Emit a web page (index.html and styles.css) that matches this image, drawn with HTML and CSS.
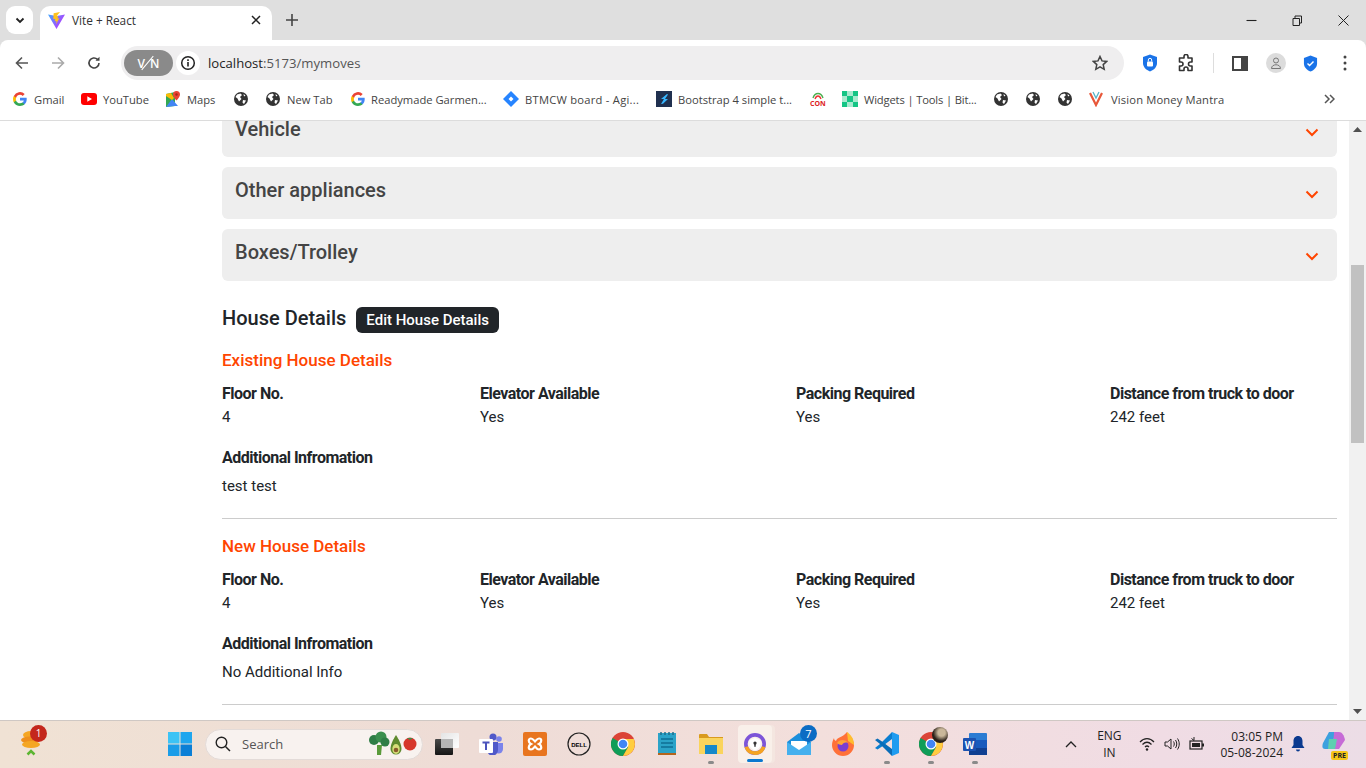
FILE: index.html
```html
<!DOCTYPE html>
<html lang="en">
<head>
    <meta charset="UTF-8">
    <title>Vite + React</title>
    <link rel="stylesheet" href="styles.css">
</head>
<body>

    <!-- Tab strip -->
    <div class="tabstrip">
        <div class="tab-search">
            <svg width="12" height="12" viewBox="0 0 12 12"><path d="M2.500 4.500 6 8l3.500-3.500" fill="none" stroke="#222" stroke-width="1.800"/></svg>
        </div>
        <div class="tab">
            <svg class="tab-icon" width="17" height="17" viewBox="0 0 16 16">
                <defs>
                    <linearGradient id="vite-body" x1="0" y1="0" x2="1" y2="0.600">
                        <stop offset="0" stop-color="#41a8ff"/>
                        <stop offset="1" stop-color="#bd34fe"/>
                    </linearGradient>
                </defs>
                <path d="M0 2.300 8 16 16 2.300 8 3.700Z" fill="url(#vite-body)"/>
                <path d="M11.300 0 5.300 1.100 5 6.800l1.800-.4-.4 2.400 1.600-.4-.5 3.200 3.200-5.800-1.800.4.700-2.400-1.600.3Z" fill="#ffc21c"/>
            </svg>
            <span class="tab-title">Vite + React</span>
            <svg class="tab-close" width="10" height="10" viewBox="0 0 10 10"><path d="M1 1l8 8M9 1 1 9" stroke="#222" stroke-width="1.500"/></svg>
        </div>
        <svg class="new-tab" width="12" height="12" viewBox="0 0 12 12"><path d="M6 0v12M0 6h12" stroke="#444" stroke-width="1.600"/></svg>
        <div class="window-controls">
            <svg width="11" height="11" viewBox="0 0 11 11"><path d="M0.500 5.500h10" stroke="#222" stroke-width="1.100"/></svg>
            <svg width="11" height="11" viewBox="0 0 11 11"><path d="M1 3.500h6.500v7H1zM3 3.500V1h6.500v7H7.500" fill="none" stroke="#222"/></svg>
            <svg width="11" height="11" viewBox="0 0 11 11"><path d="M.5.5l10 10M10.500.5l-10 10" stroke="#222" stroke-width="1"/></svg>
        </div>
    </div>

    <!-- Address bar -->
    <div class="toolbar">
        <svg class="nav-icon" width="14" height="14" viewBox="0 0 14 14"><path d="M13 7H2M7 1.500 1.500 7 7 12.500" fill="none" stroke="#555" stroke-width="1.600"/></svg>
        <svg class="nav-icon" width="14" height="14" viewBox="0 0 14 14"><path d="M1 7h11M7 1.500 12.500 7 7 12.500" fill="none" stroke="#aaa" stroke-width="1.600"/></svg>
        <svg class="nav-icon" width="14" height="14" viewBox="0 0 14 14"><path d="M12 7a5 5 0 1 1-1.500-3.600" fill="none" stroke="#444" stroke-width="1.600"/><path d="M12.500 0.800v4h-4z" fill="#444"/></svg>
        <div class="omnibox">
            <div class="vpn-pill"><span>V</span><i></i><span>N</span></div>
            <div class="site-info">
                <svg width="16" height="16" viewBox="0 0 16 16"><circle cx="8" cy="8" r="6.300" fill="none" stroke="#222" stroke-width="1.500"/><path d="M8 7v4.500M8 4.200v1.700" stroke="#222" stroke-width="1.600"/></svg>
            </div>
            <span class="url"><span class="url-host">localhost</span>:5173/mymoves</span>
            <svg class="star" width="16" height="16" viewBox="0 0 16 16"><path d="M8 1.500l2 4.400 4.700.5-3.500 3.200 1 4.700L8 11.900l-4.200 2.400 1-4.700L1.300 6.400 6 5.900Z" fill="none" stroke="#444" stroke-width="1.500"/></svg>
        </div>
        <div class="toolbar-icons">
            <svg class="ti-lock" width="16" height="18" viewBox="0 0 16 18"><path d="M8 0.500 15 3v6c0 4-3 7-7 8.500C4 16 1 13 1 9V3Z" fill="#1a73e8"/><rect x="5" y="7.500" width="6" height="5" rx="1" fill="#fff"/><path d="M6.300 7.500V6a1.700 1.700 0 0 1 3.400 0v1.500" fill="none" stroke="#fff"/></svg>
            <svg width="18" height="18" viewBox="0 0 18 18"><path d="M7 2.500a2 2 0 0 1 4 0V4h4v4h-1.500a2 2 0 0 0 0 4H15v4.500H11V15a2 2 0 0 0-4 0v1.500H2.500V12H4a2 2 0 0 0 0-4H2.500V4H7Z" fill="none" stroke="#333" stroke-width="1.600" stroke-linejoin="round"/></svg>
            <i class="toolbar-sep"></i>
            <svg width="16" height="16" viewBox="0 0 16 16"><path fill-rule="evenodd" d="M0 1h16v15H0ZM2 3v11h7V3Z" fill="#444"/></svg>
            <div class="avatar">
                <svg width="12" height="12" viewBox="0 0 12 12"><circle cx="6" cy="3.500" r="2.500" fill="none" stroke="#777"/><path d="M1.500 11.500c0-5 9-5 9 0Z" fill="none" stroke="#777"/></svg>
            </div>
            <svg class="ti-check" width="15" height="17" viewBox="0 0 16 18"><path d="M8 0.500 15 3v6c0 4-3 7-7 8.500C4 16 1 13 1 9V3Z" fill="#1a73e8"/><path d="M4.800 9 7 11.200 11.200 6.800" fill="none" stroke="#fff" stroke-width="1.500"/></svg>
            <svg class="ti-menu" width="4" height="16" viewBox="0 0 4 16"><circle cx="2" cy="2" r="1.500" fill="#444"/><circle cx="2" cy="8" r="1.500" fill="#444"/><circle cx="2" cy="14" r="1.500" fill="#444"/></svg>
        </div>
    </div>

    <!-- Bookmarks -->
    <div class="bookmarks">
        <a class="bm bm-gmail"><svg width="14" height="14" viewBox="0 0 14 14"><use href="#g-logo"/></svg>Gmail</a>
        <a class="bm bm-yt"><svg width="16" height="12" viewBox="0 0 16 12"><rect width="16" height="12" rx="3" fill="#f00"/><path d="M6.300 3.300v5.400L11 6Z" fill="#fff"/></svg>YouTube</a>
        <a class="bm bm-maps"><svg width="14" height="16" viewBox="0 0 14 16"><path d="M0 3 9 1v14L0 16Z" fill="#34a853"/><path d="M0 16 6 8l6 7-3 0Z" fill="#4285f4"/><path d="M0 3l5-1 3 5-2 2-6-4Z" fill="#fbbc04"/><path d="M10.500 0a3.500 3.500 0 0 1 3.500 3.500c0 2.500-3.500 6-3.500 6S7 6 7 3.500A3.500 3.500 0 0 1 10.500 0Z" fill="#ea4335"/><circle cx="10.500" cy="3.500" r="1.200" fill="#a52714"/></svg>Maps</a>
        <a class="bm bm-globe"><svg width="14" height="14" viewBox="0 0 14 14"><use href="#globe"/></svg></a>
        <a class="bm bm-newtab"><svg width="14" height="14" viewBox="0 0 14 14"><use href="#globe"/></svg>New Tab</a>
        <a class="bm bm-ready"><svg width="14" height="14" viewBox="0 0 14 14"><use href="#g-logo"/></svg>Readymade Garmen...</a>
        <a class="bm bm-jira"><svg width="16" height="16" viewBox="0 0 16 16"><path d="M8 0l8 8-8 8-8-8Z" fill="#2684ff"/><path d="M8 5.500 10.500 8 8 10.500 5.500 8Z" fill="#fff"/></svg><span class="wide-text">BTMCW board - Agi...</span></a>
        <a class="bm bm-boot"><svg width="16" height="16" viewBox="0 0 16 16"><rect width="16" height="16" fill="#20304f"/><path d="M11 3 5 8h3l-3 5 2-.2L12 8H9l3-4.500Z" fill="#38b6ff"/></svg>Bootstrap 4 simple t...</a>
        <a class="bm bm-con"><svg width="16" height="16" viewBox="0 0 16 16"><path d="M3 7c2-6 8-6 10 0" fill="none" stroke="#4caf50" stroke-width="1.400"/><path d="M5 8c1.500-4 4.500-4 6 0" fill="none" stroke="#e33" stroke-width="1.400"/></svg><span class="con-text">CON</span></a>
        <a class="bm bm-widgets"><span class="widget-logo"><i></i><i></i><i></i><i></i><i></i><i></i><i></i><i></i><i></i></span><span class="narrow-text">Widgets | Tools | Bit...</span></a>
        <a class="bm bm-globe"><svg width="14" height="14" viewBox="0 0 14 14"><use href="#globe"/></svg></a>
        <a class="bm bm-globe"><svg width="14" height="14" viewBox="0 0 14 14"><use href="#globe"/></svg></a>
        <a class="bm bm-globe bm-last-globe"><svg width="14" height="14" viewBox="0 0 14 14"><use href="#globe"/></svg></a>
        <a class="bm bm-vision"><svg width="14" height="16" viewBox="0 0 14 16"><path d="M1 2l6 12 6-12" fill="none" stroke="#e8583a" stroke-width="2.200"/><path d="M4 1l3 6 3-6" fill="none" stroke="#56b4c9" stroke-width="1.300"/></svg>Vision Money Mantra</a>
        <svg class="bm-more" width="11" height="10" viewBox="0 0 11 10"><path d="M1 1l4 4-4 4M6 1l4 4-4 4" fill="none" stroke="#555" stroke-width="1.500"/></svg>
    </div>

    <!-- Shared icon shapes -->
    <svg class="defs" width="0" height="0">
        <defs>
            <g id="g-logo">
                <path d="M13.700 7.200c0-.5 0-1-.1-1.400H7v2.700h3.800a3.200 3.200 0 0 1-1.400 2.100v1.700h2.200c1.300-1.200 2.100-3 2.100-5.100Z" fill="#4285f4"/>
                <path d="M7 14c1.900 0 3.400-.6 4.600-1.700L9.400 10.600c-.6.400-1.400.7-2.400.7-1.800 0-3.400-1.200-3.900-2.900H.8v1.800A7 7 0 0 0 7 14Z" fill="#34a853"/>
                <path d="M3.100 8.400a4.200 4.200 0 0 1 0-2.700V3.900H.8a7 7 0 0 0 0 6.300Z" fill="#fbbc05"/>
                <path d="M7 2.800c1 0 2 .4 2.700 1.100l2-2A7 7 0 0 0 .8 3.900l2.300 1.800C3.600 4 5.200 2.800 7 2.800Z" fill="#ea4335"/>
            </g>
            <g id="globe">
                <circle cx="7" cy="7" r="7" fill="#333"/>
                <path d="M3 2.500 6.500 1.500 8 3 6 5 7.500 7 5 9.500 3.500 6.500 1.500 5ZM9 8l3 .5-2 3.500-1.500-1.500ZM9.500 2l2 1.500-1.500 1Z" fill="#fff"/>
            </g>
            <g id="chrome">
                <circle cx="12" cy="12" r="12" fill="#db4437"/>
                <path d="M12 12 1.600 6A12 12 0 0 0 12 24l5.200-9Z" fill="#0f9d58"/>
                <path d="M12 7h10.800A12 12 0 0 1 12 24l5.200-9Z" fill="#ffcd40"/>
                <circle cx="12" cy="12" r="5.500" fill="#fff"/>
                <circle cx="12" cy="12" r="4.300" fill="#4285f4"/>
            </g>
        </defs>
    </svg>

    <!-- Page -->
    <div class="viewport">
        <main class="page">
            <div class="accordion">
                <div class="acc-item">
                    <h2>Vehicle</h2>
                    <svg width="14" height="9" viewBox="0 0 14 9"><path d="M1.500 1.500 7 7l5.500-5.500" fill="none" stroke="#ff4500" stroke-width="2"/></svg>
                </div>
                <div class="acc-item">
                    <h2>Other appliances</h2>
                    <svg width="14" height="9" viewBox="0 0 14 9"><path d="M1.500 1.500 7 7l5.500-5.500" fill="none" stroke="#ff4500" stroke-width="2"/></svg>
                </div>
                <div class="acc-item">
                    <h2>Boxes/Trolley</h2>
                    <svg width="14" height="9" viewBox="0 0 14 9"><path d="M1.500 1.500 7 7l5.500-5.500" fill="none" stroke="#ff4500" stroke-width="2"/></svg>
                </div>
            </div>

            <div class="house-head">
                <h3>House Details</h3>
                <button class="edit-btn">Edit House Details</button>
            </div>

            <section class="house">
                <h4>Existing House Details</h4>
                <div class="info-row">
                    <div><p class="label">Floor No.</p><p class="value">4</p></div>
                    <div><p class="label">Elevator Available</p><p class="value">Yes</p></div>
                    <div><p class="label">Packing Required</p><p class="value">Yes</p></div>
                    <div><p class="label">Distance from truck to door</p><p class="value">242 feet</p></div>
                </div>
                <p class="label extra-label">Additional Infromation</p>
                <p class="value extra">test test</p>
            </section>

            <section class="house">
                <h4>New House Details</h4>
                <div class="info-row">
                    <div><p class="label">Floor No.</p><p class="value">4</p></div>
                    <div><p class="label">Elevator Available</p><p class="value">Yes</p></div>
                    <div><p class="label">Packing Required</p><p class="value">Yes</p></div>
                    <div><p class="label">Distance from truck to door</p><p class="value">242 feet</p></div>
                </div>
                <p class="label extra-label">Additional Infromation</p>
                <p class="value extra">No Additional Info</p>
            </section>
        </main>
        <div class="scrollbar">
            <svg width="9" height="5" viewBox="0 0 9 5"><path d="M4.500 0 9 5H0Z" fill="#505050"/></svg>
            <div class="scroll-track"><div class="scroll-thumb"></div></div>
            <svg width="9" height="5" viewBox="0 0 9 5"><path d="M4.500 5 9 0H0Z" fill="#505050"/></svg>
        </div>
    </div>

    <!-- Taskbar -->
    <footer class="taskbar">
        <div class="weather">
            <svg width="22" height="28" viewBox="0 0 22 28">
                <ellipse cx="11" cy="7" rx="8" ry="4" fill="#f5a623"/>
                <ellipse cx="10" cy="12" rx="9" ry="3.500" fill="#ee8f1c"/>
                <ellipse cx="11" cy="16.500" rx="9" ry="3.500" fill="#f5a623"/>
                <path d="M7.500 26.500l3.500-3.500 3.500 3.500" fill="none" stroke="#5cb531" stroke-width="2.500"/>
            </svg>
            <span class="weather-badge">1</span>
        </div>
        <div class="task-center">
            <svg class="win-logo" width="24" height="24" viewBox="0 0 24 24">
                <rect width="11.500" height="11.500" fill="#3cc3f5"/><rect x="12.500" width="11.500" height="11.500" fill="#1fa6ee"/>
                <rect y="12.500" width="11.500" height="11.500" fill="#1a9de8"/><rect x="12.500" y="12.500" width="11.500" height="11.500" fill="#0b7fd6"/>
            </svg>
            <div class="task-search">
                <svg width="16" height="16" viewBox="0 0 16 16"><circle cx="6.500" cy="6.500" r="5.300" fill="none" stroke="#222" stroke-width="1.400"/><path d="M10.500 10.500 15 15" stroke="#222" stroke-width="1.500"/></svg>
                <span>Search</span>
                <svg class="veg" width="54" height="26" viewBox="0 0 54 26">
                    <path d="M10 14h5l-1 10H10Z" fill="#5a9a3a"/><circle cx="7" cy="9" r="5" fill="#2f7d46"/><circle cx="14" cy="6" r="5.500" fill="#3b8f4e"/><circle cx="18" cy="11" r="4.500" fill="#2f7d46"/>
                    <path d="M29 4c2.500 4 5.500 9 5.500 14a5.500 5.500 0 0 1-11 0c0-5 3-10 5.500-14Z" fill="#5f8a2f"/><ellipse cx="29" cy="18" rx="3.700" ry="5" fill="#d7dc7a"/><circle cx="29" cy="19" r="2.300" fill="#8a5a2b"/>
                    <circle cx="43" cy="13" r="6.500" fill="#d6372b"/><path d="M40 7h6l-3 2Z" fill="#3b8f4e"/>
                </svg>
            </div>
            <div class="task-icon">
                <svg width="24" height="22" viewBox="0 0 24 22">
                    <defs>
                        <linearGradient id="copy-back" x1="0" y1="0" x2="1" y2="1"><stop offset="0" stop-color="#e4e4e4"/><stop offset="1" stop-color="#fff"/></linearGradient>
                        <linearGradient id="copy-front" x1="0" y1="0" x2="0" y2="1"><stop offset="0" stop-color="#4a4a4a"/><stop offset="1" stop-color="#151515"/></linearGradient>
                    </defs>
                    <rect x="6" width="18" height="15" rx="1" fill="url(#copy-back)"/>
                    <rect y="6" width="18" height="16" rx="1" fill="url(#copy-front)"/>
                    <rect x="6" y="6" width="12" height="9" fill="#b5b5b5"/>
                </svg>
            </div>
            <div class="task-icon">
                <svg width="24" height="22" viewBox="0 0 24 22"><circle cx="20" cy="6" r="2.800" fill="#7b83eb"/><path d="M15 10h9v6a4.500 4.500 0 0 1-9 0Z" fill="#7b83eb"/><circle cx="14" cy="4" r="3.500" fill="#5059c9"/><path d="M8 9h11v8a5.500 5.500 0 0 1-11 0Z" fill="#5059c9"/><rect y="6" width="14" height="14" rx="1" fill="#fff"/><path d="M3.500 9.500h7M7 9.500v7.500" stroke="#4b53bc" stroke-width="2"/></svg>
            </div>
            <div class="task-icon">
                <svg width="24" height="24" viewBox="0 0 24 24"><rect width="24" height="24" rx="2" fill="#e8751f"/><path d="M8 6.500c-3 0-3 4 0 5.500-3 1.500-3 5.500 0 5.500 2 0 3-2 4-3 1 1 2 3 4 3 3 0 3-4 0-5.500 3-1.500 3-5.500 0-5.500-2 0-3 2-4 3-1-1-2-3-4-3Z" fill="none" stroke="#fff" stroke-width="2.200"/></svg>
            </div>
            <div class="task-icon">
                <svg width="24" height="24" viewBox="0 0 24 24"><circle cx="12" cy="12" r="11" fill="none" stroke="#222" stroke-width="1.200"/><text class="dell-text" x="12" y="14.500" text-anchor="middle">DELL</text></svg>
            </div>
            <div class="task-icon">
                <svg width="24" height="24" viewBox="0 0 24 24"><use href="#chrome"/></svg>
            </div>
            <div class="task-icon">
                <svg width="18" height="24" viewBox="0 0 18 24"><rect y="1" width="18" height="22" fill="#2ba3c8"/><path d="M3 0v3M7 0v3M11 0v3M15 0v3" stroke="#1f6f8a" stroke-width="1.500"/><path d="M3 7h12M3 11h12M3 15h12" stroke="#0f6f94" stroke-width="1.500"/><rect y="21" width="18" height="2" fill="#b5651d"/></svg>
            </div>
            <div class="task-icon running">
                <svg width="24" height="22" viewBox="0 0 24 22"><path d="M0 2a1 1 0 0 1 1-1h7l2 3h14v17H0Z" fill="#d99a1e"/><path d="M0 5h24v16H0Z" fill="#fad45c"/><rect x="6" y="12" width="12" height="9" fill="#1688c9"/></svg>
            </div>
            <div class="task-icon active">
                <svg width="22" height="24" viewBox="0 0 24 26"><circle cx="12" cy="13" r="10" fill="none" stroke="#7d55d8" stroke-width="4"/><path d="M2.500 16a10 10 0 0 0 19 0" fill="none" stroke="#f6a421" stroke-width="4"/><path d="M12 6.500 18 9v4c0 3-2.500 5.500-6 7-3.500-1.500-6-4-6-7V9Z" fill="#fff"/><circle cx="12" cy="12" r="1.800" fill="#333"/><path d="M11.200 13h1.600v3h-1.600z" fill="#333"/></svg>
            </div>
            <div class="task-icon badge-wrap">
                <svg width="24" height="22" viewBox="0 0 24 22"><path d="M0 9 12 0l12 9v13H0Z" fill="#1b8fdc"/><path d="M4 8h16v7l-8 4-8-4Z" fill="#fff"/><path d="M0 9l12 8 12-8v13H0Z" fill="#45b0ee"/></svg>
                <span class="mail-badge">7</span>
            </div>
            <div class="task-icon">
                <svg width="24" height="24" viewBox="0 0 24 24"><path d="M16 0c1 3 7 6 7 13a11 11 0 0 1-22 0c0-3 1-5 2-7 0 2 1 2 2 3 1-4 6-3 11-9Z" fill="#ff7139"/><path d="M16 0c3 2 7 6 7 13l-6-4Z" fill="#ffbd2e"/><circle cx="12" cy="14" r="5.500" fill="#7b3fd0"/><path d="M6 11c2-4 9-4 11 0-3-1-5 0-6 2-2 0-4-1-5-2Z" fill="#ffa436"/></svg>
            </div>
            <div class="task-icon running">
                <svg width="24" height="24" viewBox="0 0 24 24"><path d="M17 0 24 3v18l-7 3V0Z" fill="#1f9cf0"/><path d="M17 0v7L7 14.500 2.500 17.500 0 16l5-4Z" fill="#0b7ed0"/><path d="M17 24v-7L7 9.500 2.500 6.500 0 8l5 4Z" fill="#0a6db8"/></svg>
            </div>
            <div class="task-icon running chrome-user">
                <svg width="24" height="24" viewBox="0 0 24 24"><use href="#chrome"/></svg>
                <span class="user-pic"></span>
            </div>
            <div class="task-icon running">
                <svg width="24" height="22" viewBox="0 0 24 22"><rect x="6" width="18" height="22" rx="1" fill="#2b7cd3"/><rect x="6" y="7" width="18" height="8" fill="#185abd"/><rect x="6" y="15" width="18" height="7" fill="#103f91"/><rect y="5" width="13" height="13" rx="1" fill="#1b52b0"/><text class="word-text" x="6.500" y="15.500" text-anchor="middle">W</text></svg>
            </div>
        </div>
        <div class="tray">
            <svg class="tray-up" width="12" height="7" viewBox="0 0 12 7"><path d="M1 6l5-5 5 5" fill="none" stroke="#222" stroke-width="1.300"/></svg>
            <div class="lang">ENG<br>IN</div>
            <div class="tray-status">
                <svg width="16" height="14" viewBox="0 0 16 14"><path d="M1 5c4-4.500 10-4.500 14 0M3.500 7.500c3-3 6-3 9 0M6 10c1.300-1.300 2.700-1.300 4 0" fill="none" stroke="#222" stroke-width="1.200"/><circle cx="8" cy="12.500" r="1.200" fill="#222"/></svg>
                <svg width="16" height="14" viewBox="0 0 16 14"><path d="M1 5h2.500L7 2v10L3.500 9H1Z" fill="none" stroke="#222"/><path d="M9.500 4.500c1 1.500 1 3.500 0 5M11.500 3c1.700 2.500 1.700 5.500 0 8M13.500 1.500c2.300 3.500 2.300 7.500 0 11" fill="none" stroke="#222"/></svg>
                <svg width="16" height="14" viewBox="0 0 16 14"><rect x="1" y="4" width="12" height="8" fill="none" stroke="#222" stroke-width="1.200"/><rect x="3" y="6" width="8" height="4" fill="#222"/><rect x="13" y="6.500" width="2" height="3" fill="#222"/><path d="M5 0v3.500M2.500 1.500l2.500 2" stroke="#222"/></svg>
            </div>
            <div class="clock">03:05 PM<br>05-08-2024</div>
            <svg class="bell" width="14" height="16" viewBox="0 0 14 16"><path d="M7 0c3 0 4.500 2.500 4.500 5v4l2 3H.5l2-3V5C2.500 2.500 4 0 7 0Z" fill="#0b3a8f"/><path d="M5 13.500h4a2 2 0 0 1-4 0Z" fill="#0b3a8f"/></svg>
            <div class="copilot">
                <svg width="24" height="22" viewBox="0 0 24 22"><path d="M7 1h6l-3 17H3c-3 0-3-3-2-6Z" fill="#3ca0de"/><path d="M12 1h5c3 0 5 3 6 8l-6 9H11Z" fill="#c66bd6"/><path d="M7 8h8l-2 10H6Z" fill="#5ecfb0"/></svg>
                <span class="pre-tag">PRE</span>
            </div>
        </div>
    </footer>

</body>
</html>
```

FILE: styles.css
```css
* {
    box-sizing: border-box;
}

body {
    margin: 0;
    height: 768px;
    overflow: hidden;
    display: flex;
    flex-direction: column;
    font-family: "Open Sans", "Noto Sans", sans-serif;
    background-color: #dfdfdf;
}

.defs {
    position: absolute;
}

/* Tab strip */
.tabstrip {
    height: 40px;
    flex: none;
    display: flex;
    align-items: flex-end;
    background-color: #dfdfdf;
    padding-left: 6px;
}

.tab-search {
    width: 27px;
    height: 28px;
    margin-bottom: 6px;
    display: flex;
    align-items: center;
    justify-content: center;
    background-color: #fff;
    border-radius: 9px;
}

.tab {
    width: 232px;
    height: 34px;
    margin-left: 7px;
    padding: 0 11px 6px 8px;
    display: flex;
    align-items: center;
    background-color: #fff;
    border-radius: 10px 10px 0 0;
    font-size: 11.800px;
    color: #333;
}

.tab-title {
    margin-left: 7px;
    flex: 1;
}

.new-tab {
    margin: 0 0 14px 14px;
}

.window-controls {
    margin-left: auto;
    display: flex;
    gap: 35px;
    padding: 0 17px 14px 0;
}

/* Address bar */
.toolbar {
    height: 46px;
    flex: none;
    display: flex;
    align-items: center;
    padding: 0 14px 0 15px;
    background-color: #fff;
    border-radius: 8px 8px 0 0;
}

.nav-icon {
    margin-right: 22px;
}

.nav-icon:nth-child(3) {
    margin-right: 20px;
}

.omnibox {
    width: 1003px;
    height: 34px;
    flex: none;
    display: flex;
    align-items: center;
    padding: 0 16px 0 3px;
    background-color: #efeeef;
    border-radius: 17px;
}

.vpn-pill {
    width: 49px;
    height: 26px;
    display: flex;
    align-items: center;
    justify-content: center;
    gap: 1px;
    background-color: #8a8a8a;
    border-radius: 13px;
    color: #fff;
    font-size: 12px;
    font-weight: 600;
}

.vpn-pill i {
    width: 1px;
    height: 18px;
    margin: 0 1px;
    background-color: #fff;
    transform: rotate(40deg);
}

.site-info {
    width: 24px;
    height: 24px;
    margin-left: 3px;
    display: flex;
    align-items: center;
    justify-content: center;
    background-color: #fff;
    border-radius: 50%;
}

.url {
    margin-left: 8px;
    flex: 1;
    font-size: 13.150px;
    color: #555;
}

.url-host {
    color: #222;
}

.toolbar-icons {
    display: flex;
    align-items: center;
    margin-left: 18px;
    gap: 18px;
}

.ti-lock {
    margin-right: 1px;
}

.ti-check {
    margin-left: -1px;
}

.ti-menu {
    margin-left: 7px;
}

.toolbar-sep {
    width: 1px;
    height: 20px;
    background-color: #ddd;
}

.avatar {
    width: 20px;
    height: 20px;
    display: flex;
    align-items: center;
    justify-content: center;
    background-color: #dcdcdc;
    border-radius: 50%;
}

/* Bookmarks */
.bookmarks {
    height: 35px;
    flex: none;
    display: flex;
    align-items: center;
    padding: 0 0 8px 13px;
    background-color: #fff;
    border-bottom: 1px solid #dcdcdc;
    font-size: 11.200px;
    color: #444;
}

.bm {
    display: flex;
    align-items: center;
    gap: 6px;
    white-space: nowrap;
}

.bm-gmail { width: 68px; gap: 7px; }
.bm-yt { width: 85px; }
.bm-maps { width: 68px; gap: 7px; }
.bm-globe { width: 32px; }
.bm-last-globe { width: 31px; }
.bm-newtab { width: 85px; gap: 7px; }
.bm-ready { width: 152px; }
.bm-jira { width: 153px; }
.bm-boot { width: 154px; }
.bm-con { width: 32px; }
.bm-widgets { width: 152px; }
.bm-vision { gap: 8px; letter-spacing: 0.150px; }

.wide-text {
    letter-spacing: 0.250px;
}

.narrow-text {
    letter-spacing: -0.150px;
}

.con-text {
    margin-left: -22px;
    margin-top: 8px;
    font-size: 7px;
    font-weight: 700;
    color: #d22;
}

.widget-logo {
    width: 16px;
    height: 16px;
    display: grid;
    grid-template-columns: repeat(3, 1fr);
}

.widget-logo i:nth-child(odd) {
    background-color: #14c585;
}

.widget-logo i:nth-child(even) {
    background-color: #a9ead0;
}

.bm-more {
    margin-left: auto;
    margin-right: 31px;
}

/* Page */
.viewport {
    flex: 1;
    min-height: 0;
    display: flex;
    overflow: hidden;
    background-color: #fff;
}

.page {
    flex: 1;
    padding-left: 222px;
    padding-right: 12px;
    margin-top: -15px;
    font-family: Roboto, sans-serif;
    color: #212529;
}

.accordion {
    display: flex;
    flex-direction: column;
    gap: 10px;
}

.acc-item {
    height: 52px;
    padding: 0 18px 0 13px;
    display: flex;
    align-items: center;
    justify-content: space-between;
    background-color: #eee;
    border-radius: 6px;
}

.acc-item:first-child {
    height: 51px;
}

.acc-item h2 {
    margin: 0 0 6px;
    font-size: 20px;
    font-weight: 500;
    color: #444;
}

.acc-item svg {
    margin-top: 2px;
}

.house-head {
    display: flex;
    align-items: center;
    gap: 10px;
    margin-top: 26px;
}

.house-head h3 {
    margin: 0 0 4px;
    font-size: 20px;
    font-weight: 500;
    line-height: 22px;
}

.edit-btn {
    height: 26px;
    padding: 0 10px;
    border: none;
    border-radius: 6px;
    background-color: #212529;
    color: #fff;
    font-family: Roboto, sans-serif;
    font-size: 15px;
    font-weight: 500;
}

.house {
    border-bottom: 1px solid #ccc;
    padding-bottom: 20px;
    margin-bottom: 17px;
}

.house h4 {
    margin: 17px 0 13px;
    font-size: 17px;
    font-weight: 500;
    line-height: 20px;
    color: #ff4500;
}

.info-row {
    display: grid;
    grid-template-columns: 258px 316px 314px 1fr;
}

.label {
    margin: 0;
    font-size: 16px;
    font-weight: 700;
    letter-spacing: -0.500px;
    line-height: 22px;
}

.value {
    margin: 0;
    font-size: 15px;
    line-height: 24px;
}

.extra-label {
    margin-top: 18px;
}

.extra {
    margin-top: 5px;
}

.scrollbar {
    width: 17px;
    flex: none;
    display: flex;
    flex-direction: column;
    align-items: center;
    justify-content: space-between;
    padding: 6px 0;
    background-color: #f1f1f1;
}

.scroll-track {
    flex: 1;
    width: 100%;
    padding-top: 133px;
}

.scroll-thumb {
    height: 178px;
    margin: 0 2px;
    background-color: #c1c1c1;
}

/* Taskbar */
.taskbar {
    height: 48px;
    flex: none;
    display: flex;
    align-items: center;
    padding-bottom: 1px;
    border-top: 1px solid #cfc8c4;
    background: linear-gradient(90deg, #f0e2d4 0%, #eedcd6 35%, #f3dfdc 60%, #f0dce4 85%, #ecdde6 100%);
    font-size: 12px;
    color: #222;
}

.weather {
    width: 50px;
    margin-left: 20px;
    position: relative;
}

.weather-badge {
    position: absolute;
    top: -3px;
    left: 10px;
    width: 17px;
    height: 17px;
    border-radius: 50%;
    background-color: #c4271c;
    color: #fff;
    font-size: 10px;
    text-align: center;
    line-height: 17px;
}

.task-center {
    margin-left: 98px;
    display: flex;
    align-items: center;
}

.win-logo {
    margin-right: 13px;
}

.task-search {
    width: 218px;
    height: 31px;
    margin-right: 2px;
    padding: 0 0 0 9px;
    display: flex;
    align-items: center;
    gap: 11px;
    background-color: #f8f2ef;
    border: 1px solid #e3dbd8;
    border-radius: 16px;
    font-size: 13px;
    color: #555;
}

.veg {
    margin-left: auto;
    margin-right: 1px;
}

.task-icon {
    width: 44px;
    height: 44px;
    display: flex;
    align-items: center;
    justify-content: center;
    position: relative;
}

.task-icon.active {
    width: 34px;
    height: 38px;
    margin: 0 5px;
    background-color: #f9f0ea;
    border-radius: 4px;
    box-shadow: 3px 0 0 #f4e6e0;
}

.task-icon.active::after {
    content: "";
    position: absolute;
    bottom: 1px;
    left: 9px;
    width: 16px;
    height: 3px;
    background-color: #0b78d0;
    border-radius: 2px;
}

.task-icon.running::after {
    content: "";
    position: absolute;
    bottom: 2px;
    left: 19px;
    width: 6px;
    height: 3px;
    background-color: #8a8a8a;
    border-radius: 2px;
}

.dell-text {
    font-size: 6px;
    font-weight: 700;
    font-family: "Liberation Sans", sans-serif;
}

.word-text {
    font-size: 10px;
    font-weight: 700;
    fill: #fff;
    font-family: "Liberation Sans", sans-serif;
}

.mail-badge {
    position: absolute;
    top: 3px;
    right: 4px;
    width: 17px;
    height: 17px;
    border-radius: 50%;
    background-color: #0b6cc4;
    color: #fff;
    font-size: 11px;
    text-align: center;
    line-height: 17px;
}

.user-pic {
    position: absolute;
    top: 5px;
    right: 5px;
    width: 16px;
    height: 16px;
    border-radius: 50%;
    background: radial-gradient(circle at 60% 35%, #c9b79a 0 25%, #2a2018 60%);
}

.tray {
    margin-left: auto;
    display: flex;
    align-items: center;
    padding-right: 20px;
}

.tray-up {
    margin-right: 17px;
}

.lang {
    width: 30px;
    margin-right: 15px;
    text-align: center;
    line-height: 17px;
}

.tray-status {
    display: flex;
    gap: 9px;
    margin-right: 15px;
}

.clock {
    margin-top: 1px;
    text-align: right;
    line-height: 16px;
}

.bell {
    margin-left: 8px;
}

.copilot {
    position: relative;
    margin-left: 17px;
}

.pre-tag {
    position: absolute;
    bottom: -3px;
    right: -2px;
    padding: 0 2px;
    background-color: #f5c518;
    font-size: 7px;
    font-weight: 700;
    line-height: 9px;
    border-radius: 2px;
}
```
